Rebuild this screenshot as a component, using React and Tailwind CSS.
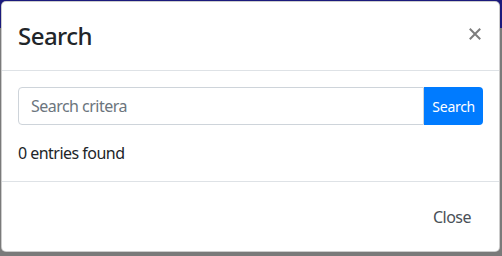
export default function App() {
  return (
    <div
      className="relative w-[502px] h-[256px] overflow-hidden bg-[#7a7a7a] tracking-[-0.033em]"
      style={{ fontFamily: '"Noto Sans", "Open Sans", sans-serif' }}
    >
      <div className="h-[28px] bg-[#1b1a7c]" />
      <div className="absolute left-[1px] top-[1px] w-[499px] h-[251px] bg-white border border-[rgba(0,0,0,0.2)] rounded-[5px] flex flex-col text-[#212529]">
        <div className="flex items-start justify-between p-4 border-b border-[#dee2e6]">
          <h4 className="text-[24px] leading-[36px] font-medium">Search</h4>
          <button className="mt-[10px] mr-[2px] w-[12px] h-[12px]" aria-label="Close">
            <svg viewBox="0 0 12 12" width="12" height="12">
              <path d="M1.5 1.5 L10.5 10.5 M10.5 1.5 L1.5 10.5" stroke="#7d7d7d" strokeWidth="2" strokeLinecap="square" />
            </svg>
          </button>
        </div>
        <div className="p-4">
          <div className="flex h-[38px] mb-4">
            <input
              className="flex-1 min-w-0 border border-[#ced4da] rounded-l-[4px] px-3 text-[16px] outline-none placeholder:text-[#6c757d] tracking-[-0.033em]"
              placeholder="Search critera"
            />
            <button className="bg-[#007bff] text-white text-[14px] px-2 rounded-r-[4px] tracking-[-0.02em]">
              Search
            </button>
          </div>
          <p className="text-[16px] leading-[24px]">0 entries found</p>
        </div>
        <div className="flex-1 flex items-center justify-end px-4 border-t border-[#dee2e6]">
          <button className="h-[38px] px-3 text-[16px] text-[#495057]">Close</button>
        </div>
      </div>
    </div>
  );
}
